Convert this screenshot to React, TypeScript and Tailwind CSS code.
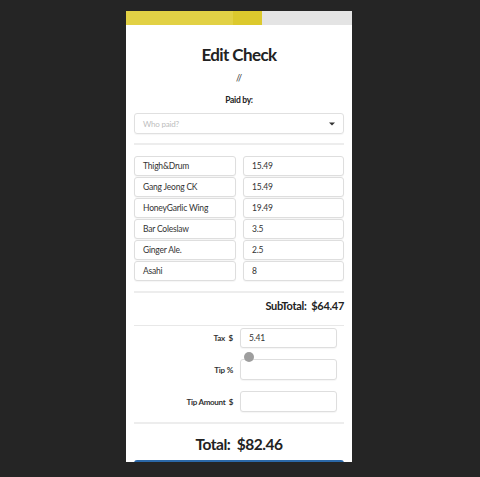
import React from "react";

const items: [string, string][] = [
  ["Thigh&Drum", "15.49"],
  ["Gang Jeong CK", "15.49"],
  ["HoneyGarlic Wing", "19.49"],
  ["Bar Coleslaw", "3.5"],
  ["Ginger Ale.", "2.5"],
  ["Asahi", "8"],
];

function Field({ value, className = "" }: { value?: string; className?: string }) {
  return (
    <div
      className={`h-[20px] border border-[#dedede] rounded-[3px] bg-white flex items-center pl-[8px] text-[8.5px] tracking-[-0.2px] text-[#333] shadow-[0_1px_1px_rgba(0,0,0,0.04)] ${className}`}
    >
      {value}
    </div>
  );
}

export default function App() {
  return (
    <div className="w-[480px] h-[477px] bg-[#252525] overflow-hidden pt-[11px] pl-[126px] font-['Lato','Open_Sans',sans-serif]">
      <div className="w-[226px] h-[451px] bg-white overflow-hidden flex flex-col">
        <div className="h-[14px] bg-[#e4e4e4] flex shrink-0">
          <div className="w-[107px] bg-[#e2d145]" />
          <div className="w-[29px] bg-[#dcc92d]" />
        </div>
        <div className="px-[8px] flex flex-col">
          <h1 className="mt-[19px] text-[17px] leading-[22px] font-bold text-center text-[#222] tracking-[-0.6px]">
            Edit Check
          </h1>
          <div className="mt-[6px] text-[9px] leading-[12px] text-center text-[#333]">//</div>
          <div className="mt-[10px] text-[8.5px] leading-[12px] font-bold text-center text-[#222] tracking-[-0.3px]">
            Paid by:
          </div>
          <div className="mt-[7px] h-[21px] border border-[#e0e0e0] rounded-[3px] flex items-center justify-between pl-[8px] pr-[8px] shadow-[0_1px_1px_rgba(0,0,0,0.04)]">
            <span className="text-[8px] tracking-[-0.2px] text-[#bdbdbd]">Who paid?</span>
            <svg width="6" height="4" viewBox="0 0 6 4">
              <path d="M0 0.5 L6 0.5 L3 3.5 Z" fill="#333" />
            </svg>
          </div>
          <div className="mt-[9px] h-[2px] bg-[#ededed]" />
          <div className="mt-[11px] flex flex-col gap-[1px]">
            {items.map(([n, p]) => (
              <div key={n} className="flex gap-[7px]">
                <Field value={n} className="w-[102px]" />
                <Field value={p} className="w-[101px]" />
              </div>
            ))}
          </div>
          <div className="mt-[10px] h-[2px] bg-[#ededed]" />
          <div className="mt-[5px] h-[16px] flex items-center justify-end text-[11px] font-bold text-[#222] whitespace-pre tracking-[-0.3px]">
            {"SubTotal:  $64.47"}
          </div>
          <div className="mt-[11px] h-[1px] bg-[#e8e8e8]" />
          <div className="mt-[2px] flex items-center justify-end gap-[7px] pr-[7px]">
            <span className="text-[8px] font-bold text-[#333] whitespace-pre tracking-[-0.2px]">{"Tax  $"}</span>
            <Field value="5.41" className="w-[97px]" />
          </div>
          <div className="relative mt-[11px] flex items-center justify-end gap-[7px] pr-[7px]">
            <span className="text-[8px] font-bold text-[#333] whitespace-pre tracking-[-0.2px]">Tip %</span>
            <Field className="w-[97px] h-[21px]" />
            <div className="absolute left-[110px] top-[-7px] w-[10px] h-[10px] rounded-full bg-[#9e9e9e]" />
          </div>
          <div className="mt-[11px] flex items-center justify-end gap-[7px] pr-[7px]">
            <span className="text-[8px] font-bold text-[#333] whitespace-pre tracking-[-0.3px]">{"Tip Amount  $"}</span>
            <Field className="w-[97px] h-[21px]" />
          </div>
          <div className="mt-[10px] h-[2px] bg-[#ededed]" />
          <div className="mt-[9px] h-[24px] flex items-center justify-center text-[15.5px] font-bold text-[#222] whitespace-pre tracking-[-0.5px]">
            {"Total:  $82.46"}
          </div>
          <div className="mt-[3px] h-[36px] rounded-[3px] bg-[#2b68a8]" />
        </div>
      </div>
    </div>
  );
}
